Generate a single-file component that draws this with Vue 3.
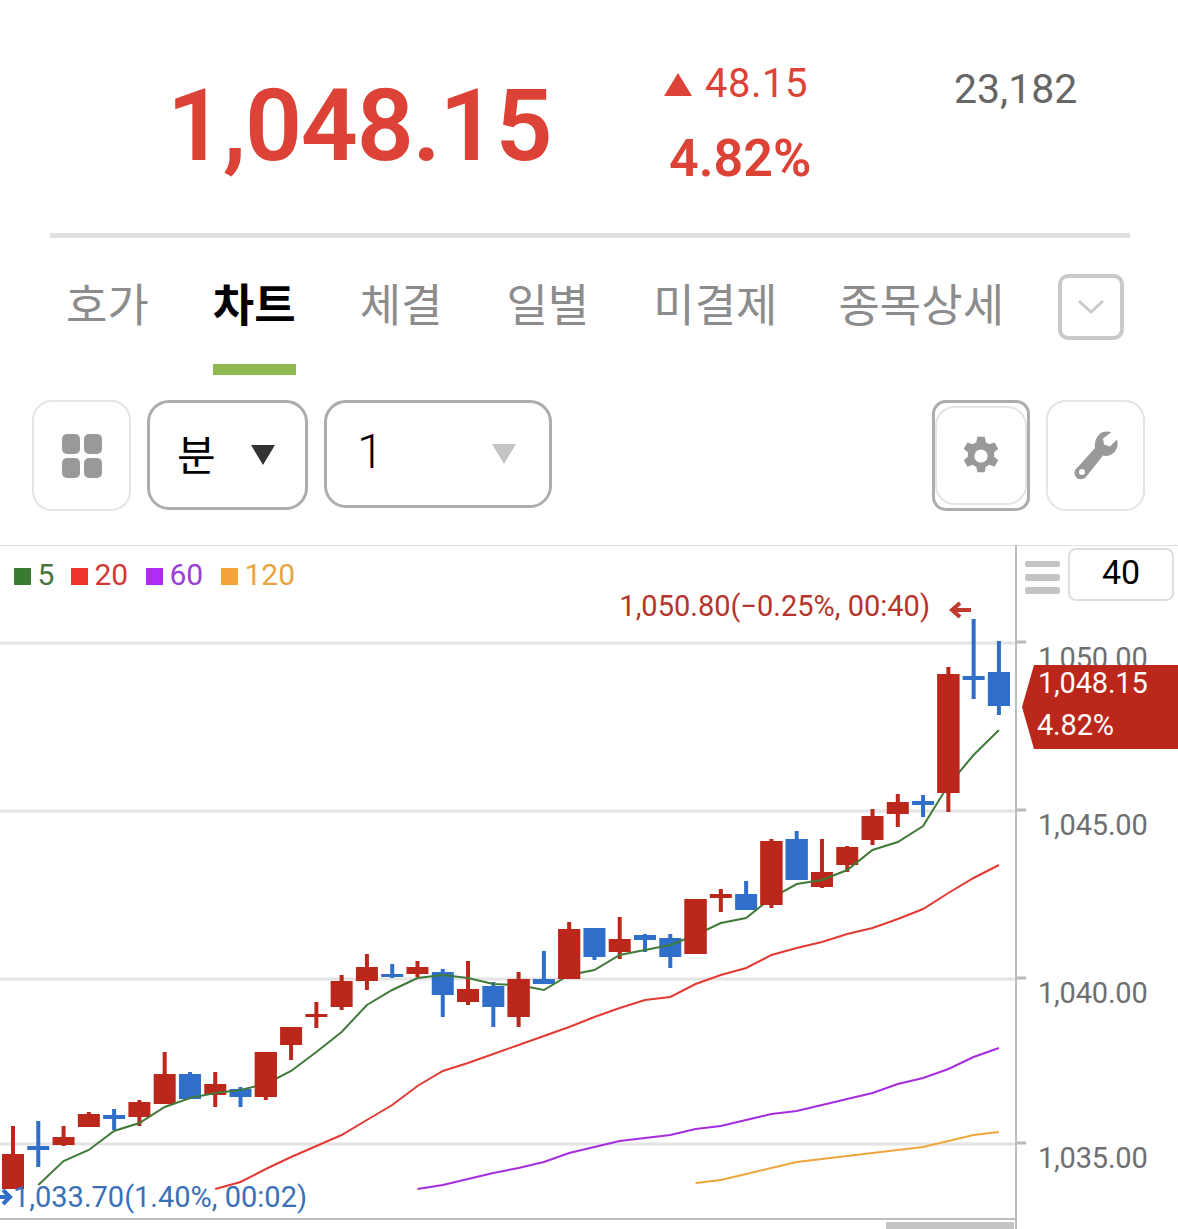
<script setup>
const tabs = ['호가', '차트', '체결', '일별', '미결제', '종목상세']

const xs = Array.from({ length: 40 }, (_, i) => 13 + i * 25.28)

// [type, bodyTop, bodyBottom, wickTop, wickBottom]
const raw = [
  ['r', 1154, 1189, 1126, 1189], ['b', 1146, 1150, 1121, 1167], ['r', 1137, 1145, 1126, 1146], ['r', 1114, 1127, 1112, 1127],
  ['b', 1115, 1119, 1109, 1130], ['r', 1102, 1117, 1100, 1126], ['r', 1074, 1104, 1052, 1104], ['b', 1074, 1099, 1072, 1099],
  ['r', 1084, 1095, 1072, 1107], ['b', 1089, 1097, 1087, 1107], ['r', 1052, 1097, 1052, 1100], ['r', 1027, 1045, 1027, 1060],
  ['r', 1014, 1017, 1002, 1028], ['r', 981, 1007, 975, 1010], ['r', 967, 981, 954, 990], ['b', 974, 977, 964, 978],
  ['r', 967, 974, 961, 977], ['b', 972, 995, 969, 1017], ['r', 989, 1002, 961, 1005], ['b', 986, 1007, 982, 1027],
  ['r', 979, 1017, 972, 1027], ['b', 979, 984, 951, 984], ['r', 929, 979, 922, 979], ['b', 928, 957, 928, 960],
  ['r', 939, 952, 917, 959], ['b', 935, 940, 934, 952], ['b', 938, 957, 934, 968], ['r', 899, 954, 899, 954],
  ['r', 894, 898, 889, 912], ['b', 894, 910, 881, 910], ['r', 841, 905, 839, 908], ['b', 839, 880, 831, 880],
  ['r', 872, 887, 839, 888], ['r', 847, 865, 846, 872], ['r', 816, 840, 809, 845], ['r', 802, 814, 794, 827],
  ['b', 801, 805, 795, 817], ['r', 674, 793, 667, 812], ['b', 676, 680, 619, 699], ['b', 672, 706, 641, 715],
]
const candles = raw.map(([type, top, bottom, wickTop, wickBottom], i) => ({
  x: xs[i], color: type === 'r' ? '#bb271a' : '#2f6fca', top, bottom, wickTop, wickBottom,
}))

const line = (start, ys) => ys.map((y, i) => `${xs[start + i].toFixed(1)},${y}`).join(' ')
const ma5 = line(1, [1185, 1161, 1150, 1131, 1123, 1107, 1098, 1093, 1090, 1084, 1071, 1052, 1032, 1005, 990, 978, 975, 978, 984, 985, 990, 975, 970, 955, 950, 945, 935, 923, 918, 898, 884, 880, 870, 850, 842, 826, 785, 755, 730])
const ma20 = line(8, [1189, 1182, 1169, 1157, 1146, 1135, 1120, 1105, 1086, 1071, 1063, 1054, 1045, 1036, 1027, 1017, 1008, 1000, 997, 984, 975, 968, 955, 948, 942, 934, 928, 919, 909, 893, 878, 865])
const ma60 = line(16, [1189, 1185, 1179, 1173, 1168, 1162, 1153, 1147, 1141, 1138, 1135, 1129, 1126, 1120, 1114, 1111, 1105, 1099, 1093, 1084, 1078, 1069, 1057, 1048])
const ma120 = line(27, [1183, 1180, 1174, 1168, 1162, 1159, 1156, 1153, 1150, 1147, 1141, 1135, 1132])

const legend = [
  { x: 14, sq: '#3a7a33', fg: '#46763f', label: '5' },
  { x: 71, sq: '#ee332d', fg: '#d13a34', label: '20' },
  { x: 146, sq: '#b02cf5', fg: '#9b3fd6', label: '60' },
  { x: 221, sq: '#f4a23a', fg: '#e8a444', label: '120' },
]
const grid = [643, 811, 979, 1144]
const ticks = [{ y: 642, label: '1,050.00' }, { y: 809, label: '1,045.00' }, { y: 977, label: '1,040.00' }, { y: 1142, label: '1,035.00' }]
</script>

<template>
  <div class="page">
    <header class="quote">
      <div class="price">1,048.15</div>
      <div class="change">
        <div class="delta"><span class="up"></span>48.15</div>
        <div class="rate">4.82%</div>
      </div>
      <div class="volume">23,182</div>
    </header>

    <nav class="tabs">
      <span v-for="tab in tabs" :key="tab" class="tab" :class="{ active: tab === '차트' }">{{ tab }}</span>
      <button class="more" type="button">
        <svg width="30" height="20" viewBox="0 0 30 20"><path d="M3 4l12 11L27 4" fill="none" stroke="#c9c9c9" stroke-width="3" /></svg>
      </button>
    </nav>

    <div class="toolbar">
      <button class="tool" type="button">
        <svg width="40" height="44" viewBox="0 0 40 44" fill="#999">
          <rect x="0" y="0" width="18" height="20" rx="5" /><rect x="22" y="0" width="18" height="20" rx="5" />
          <rect x="0" y="24" width="18" height="20" rx="5" /><rect x="22" y="24" width="18" height="20" rx="5" />
        </svg>
      </button>
      <div class="select unit"><span>분</span><i class="caret dark"></i></div>
      <div class="select period"><span>1</span><i class="caret light"></i></div>
      <div class="spacer"></div>
      <button class="tool gear" type="button">
        <svg width="44" height="44" viewBox="0 0 24 24"><path fill="#999" fill-rule="evenodd" d="M10 1.5h4l.6 3a8 8 0 0 1 1.9 1.1l2.9-1 2 3.5-2.3 2a8 8 0 0 1 0 2.2l2.3 2-2 3.5-2.9-1a8 8 0 0 1-1.9 1.1l-.6 3h-4l-.6-3a8 8 0 0 1-1.9-1.1l-2.9 1-2-3.5 2.3-2a8 8 0 0 1 0-2.2l-2.3-2 2-3.5 2.9 1a8 8 0 0 1 1.9-1.1zM12 8.4a3.6 3.6 0 1 0 0 7.2 3.6 3.6 0 0 0 0-7.2z" /></svg>
      </button>
      <button class="tool" type="button">
        <svg width="46" height="50" viewBox="0 0 46 50"><path fill="#999" fill-rule="evenodd" d="M30 1c4-1 7-.5 8 .5l-8 6 1 6 6 2 7-7c1 4 1 9-3 13-3 3-7 4-11 3L13 46c-3 3-8 3-10 0s-2-7 1-9L22 17c-1-6 2-14 8-16zM9 38a3 3 0 1 0 0 6 3 3 0 0 0 0-6z" /></svg>
      </button>
    </div>

    <section class="chart">
      <svg class="plot" width="1178" height="684" viewBox="0 545 1178 684">
        <line v-for="y in grid" :key="y" x1="0" x2="1016" :y1="y" :y2="y" stroke="#e4e4e4" stroke-width="3" />
        <line x1="0" x2="1178" y1="545" y2="545" stroke="#bdbdbd" />
        <line x1="1016" x2="1016" y1="545" y2="1229" stroke="#bdbdbd" stroke-width="2" />
        <line x1="0" x2="1016" y1="1219" y2="1219" stroke="#bdbdbd" stroke-width="2" />
        <line v-for="y in grid" :key="'t' + y" x1="1017" x2="1026" :y1="y - 1" :y2="y - 1" stroke="#b9b9b9" stroke-width="3" />
        <rect x="886" y="1222" width="128" height="7" fill="#c4c4c4" />

        <g v-for="item in legend" :key="item.label">
          <rect :x="item.x" y="568" width="17" height="17" :fill="item.sq" />
          <text :x="item.x + 23.5" y="585" class="legend" :fill="item.fg">{{ item.label }}</text>
        </g>

        <polyline :points="ma120" fill="none" stroke="#f0a63c" stroke-width="2" />
        <polyline :points="ma60" fill="none" stroke="#a62ce0" stroke-width="2" />
        <polyline :points="ma20" fill="none" stroke="#e23a34" stroke-width="2" />

        <g v-for="c in candles" :key="c.x">
          <rect :x="c.x - 2" :y="c.wickTop" width="4" :height="c.wickBottom - c.wickTop" :fill="c.color" />
          <rect :x="c.x - 11" :y="c.top" width="22" :height="c.bottom - c.top" :fill="c.color" />
        </g>
        <polyline :points="ma5" fill="none" stroke="#3f7a38" stroke-width="2" />
        <g v-for="c in candles" :key="'o' + c.x">
          <rect v-if="c.bottom - c.top > 30" :x="c.x - 11" :y="c.top" width="22" :height="c.bottom - c.top" :fill="c.color" />
        </g>

        <text x="930" y="616" text-anchor="end" class="note" fill="#b5352c">1,050.80(−0.25%, 00:40)</text>
        <path d="M971 610h-18M960 603l-8 7 8 7" fill="none" stroke="#c23a2e" stroke-width="4" />
        <text x="13" y="1207" class="note" fill="#3a70b8">1,033.70(1.40%, 00:02)</text>
        <path d="M-2 1197h11M3 1190l7 7-7 7" fill="none" stroke="#2f6fca" stroke-width="4" />

        <rect x="1025" y="561" width="35" height="6" rx="2" fill="#c4c4c4" />
        <rect x="1025" y="574" width="35" height="7" rx="2" fill="#c4c4c4" />
        <rect x="1025" y="587" width="35" height="7" rx="2" fill="#c4c4c4" />

        <text v-for="t in ticks" :key="t.label" x="1038" :y="t.y + 26" class="axis" fill="#6f6f6f">{{ t.label }}</text>

        <polygon points="1034,665 1178,665 1178,749 1034,749 1022,707" fill="#bb271a" />
        <text x="1038" y="693" class="axis" fill="#fff">1,048.15</text>
        <text x="1037" y="735" class="axis" fill="#fff">4.82%</text>
      </svg>
      <div class="zoom-box">40</div>
    </section>
  </div>
</template>

<style>
html, body { margin: 0; background: #fff; }
</style>

<style scoped>
.page {
  width: 1178px;
  height: 1229px;
  overflow: hidden;
  background: #fff;
  font-family: Roboto, "Noto Sans CJK KR", sans-serif;
}

.quote {
  display: flex;
  align-items: flex-start;
  height: 238px;
  margin: 0 48px 0 50px;
  box-sizing: border-box;
  border-bottom: 5px solid #e0e0e0;
}

.price {
  margin: 70px 0 0 117px;
  width: 387px;
  color: #dc4236;
  font-size: 100px;
  line-height: 112px;
  font-weight: 600;
  letter-spacing: -1.3px;
  white-space: nowrap;
}

.change {
  width: 200px;
  margin: 61px 0 0 110px;
  color: #dc4236;
}

.delta {
  display: flex;
  align-items: center;
  font-size: 40px;
  line-height: 46px;
  letter-spacing: 0.5px;
}

.up {
  width: 0;
  height: 0;
  margin-right: 13px;
  border-left: 14px solid transparent;
  border-right: 14px solid transparent;
  border-bottom: 23px solid #dc4236;
}

.rate {
  margin: 24px 0 0 5px;
  font-size: 52px;
  line-height: 56px;
  font-weight: 600;
}

.volume {
  margin: 66px 0 0 90px;
  color: #666;
  font-size: 41px;
  line-height: 46px;
}

.tabs {
  display: flex;
  align-items: flex-start;
  height: 137px;
  padding-left: 66px;
  box-sizing: border-box;
  gap: 64px;
}

.tab {
  flex: none;
  height: 125px;
  padding-top: 39px;
  box-sizing: border-box;
  color: #8c8c8c;
  font-size: 45px;
  line-height: 60px;
  white-space: nowrap;
}

.tab:last-of-type {
  margin-left: -3px;
}

.tab.active {
  height: 137px;
  border-bottom: 11px solid #8fb84f;
  color: #000;
  font-weight: 700;
}

.more {
  flex: none;
  width: 66px;
  height: 66px;
  margin: 36px 0 0 -10px;
  display: grid;
  place-items: center;
  padding: 0;
  background: #fff;
  border: 4px solid #c9c9c9;
  border-radius: 10px;
}

.toolbar {
  display: flex;
  align-items: flex-start;
  gap: 16px;
  height: 170px;
  padding: 25px 33px 0 32px;
  box-sizing: border-box;
}

.spacer {
  flex: 1;
}

.tool {
  position: relative;
  width: 99px;
  height: 111px;
  display: grid;
  place-items: center;
  padding: 0;
  background: #fff;
  border: 2px solid #e4e4e4;
  border-radius: 20px;
  box-sizing: border-box;
}

.tool.gear {
  width: 98px;
  border: 3px solid #adadad;
  border-radius: 14px;
}

.tool.gear::before {
  content: "";
  position: absolute;
  inset: 3px 0;
  border: 2px solid #e4e4e4;
  border-radius: 20px;
}

.tool.gear svg {
  position: relative;
}

.select {
  display: flex;
  align-items: center;
  justify-content: space-between;
  box-sizing: border-box;
  height: 110px;
  background: #fff;
  border: 3px solid #adadad;
  border-radius: 22px;
  color: #000;
  font-size: 42px;
}

.select span {
  position: relative;
  top: -3px;
}

.unit {
  width: 161px;
  padding: 0 30px 0 27px;
}

.period {
  width: 228px;
  height: 108px;
  padding: 0 33px 0 30px;
  font-size: 48px;
  font-weight: 300;
}

.caret {
  width: 0;
  height: 0;
  border-left: 12px solid transparent;
  border-right: 12px solid transparent;
}

.caret.dark {
  border-top: 20px solid #333;
}

.caret.light {
  border-top: 20px solid #c4c4c4;
}

.chart {
  position: relative;
  height: 684px;
}

.plot {
  display: block;
}

.legend,
.note,
.axis {
  font-family: Roboto, sans-serif;
}

.legend {
  font-size: 30px;
}

.note {
  font-size: 29px;
}

.axis {
  font-size: 29px;
  letter-spacing: -0.2px;
}

.zoom-box {
  position: absolute;
  top: 3px;
  left: 1068px;
  width: 106px;
  height: 53px;
  box-sizing: border-box;
  border: 2px solid #ddd;
  border-radius: 8px;
  background: #fff;
  color: #000;
  font-size: 34px;
  line-height: 45px;
  text-align: center;
}
</style>
